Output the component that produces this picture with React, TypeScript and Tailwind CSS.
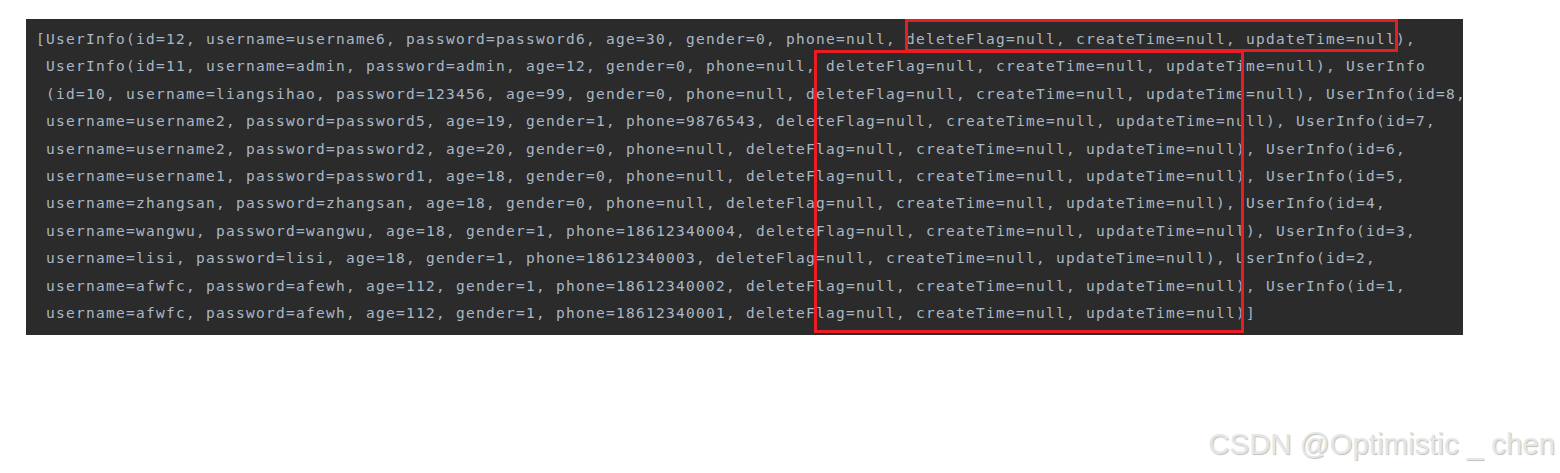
const lines = [
  "[UserInfo(id=12, username=username6, password=password6, age=30, gender=0, phone=null, deleteFlag=null, createTime=null, updateTime=null),",
  " UserInfo(id=11, username=admin, password=admin, age=12, gender=0, phone=null, deleteFlag=null, createTime=null, updateTime=null), UserInfo",
  " (id=10, username=liangsihao, password=123456, age=99, gender=0, phone=null, deleteFlag=null, createTime=null, updateTime=null), UserInfo(id=8,",
  " username=username2, password=password5, age=19, gender=1, phone=9876543, deleteFlag=null, createTime=null, updateTime=null), UserInfo(id=7,",
  " username=username2, password=password2, age=20, gender=0, phone=null, deleteFlag=null, createTime=null, updateTime=null), UserInfo(id=6,",
  " username=username1, password=password1, age=18, gender=0, phone=null, deleteFlag=null, createTime=null, updateTime=null), UserInfo(id=5,",
  " username=zhangsan, password=zhangsan, age=18, gender=0, phone=null, deleteFlag=null, createTime=null, updateTime=null), UserInfo(id=4,",
  " username=wangwu, password=wangwu, age=18, gender=1, phone=18612340004, deleteFlag=null, createTime=null, updateTime=null), UserInfo(id=3,",
  " username=lisi, password=lisi, age=18, gender=1, phone=18612340003, deleteFlag=null, createTime=null, updateTime=null), UserInfo(id=2,",
  " username=afwfc, password=afewh, age=112, gender=1, phone=18612340002, deleteFlag=null, createTime=null, updateTime=null), UserInfo(id=1,",
  " username=afwfc, password=afewh, age=112, gender=1, phone=18612340001, deleteFlag=null, createTime=null, updateTime=null)]",
];

export default function App() {
  return (
    <div className="relative w-[1560px] h-[473px] bg-white overflow-hidden">
      <div className="ml-[26px] mt-[19px] w-[1437px] h-[316px] bg-[#2b2b2b] pl-[10px] pt-[7px]">
        {lines.map((line, i) => (
          <div
            key={i}
            className="whitespace-pre text-[14.5px] tracking-[1.27px] leading-[27.4px] text-[#a9b7c6]"
            style={{ fontFamily: '"DejaVu Sans Mono", monospace' }}
          >
            {line}
          </div>
        ))}
      </div>

      {/* highlight boxes */}
      <div className="absolute left-[905px] top-[19px] w-[493px] h-[33px] border-[3px] border-[#ec1c24]" />
      <div className="absolute left-[814px] top-[50px] w-[430px] h-[283px] border-[3px] border-[#ec1c24]" />

      {/* watermark */}
      <div
        className="absolute right-[5px] top-[426px] text-[29.4px] leading-[36px] text-[#e6e6e6] whitespace-nowrap [text-shadow:1px_1px_1px_rgba(0,0,0,0.25)]"
        style={{ fontFamily: '"Liberation Sans", Arial, sans-serif' }}
      >
        CSDN @Optimistic _ chen
      </div>
    </div>
  );
}
